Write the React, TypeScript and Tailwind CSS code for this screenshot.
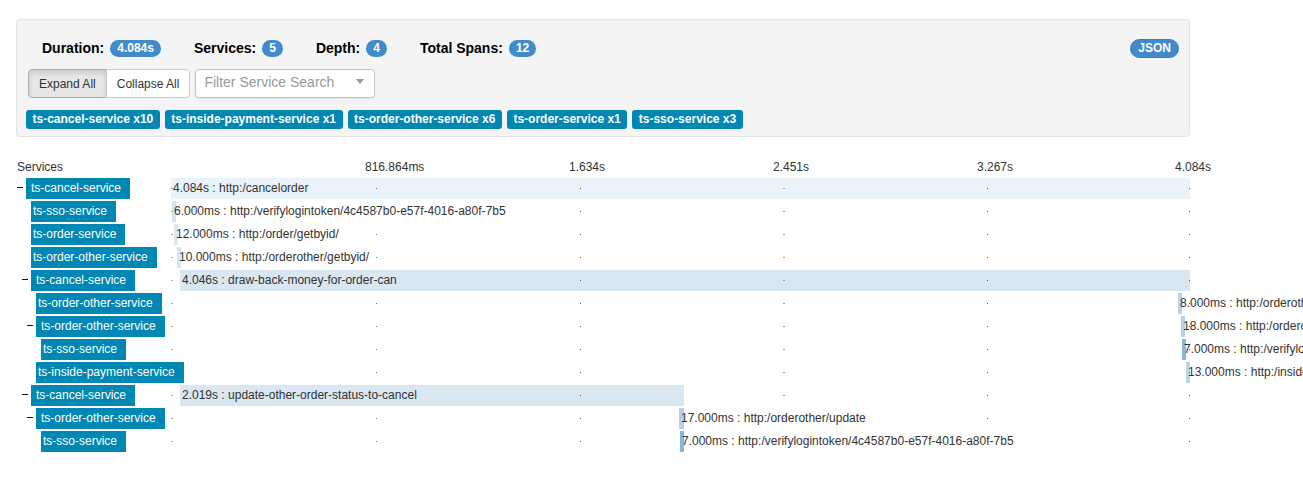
import React from "react";

type Row = {
  depth: number;
  toggle: boolean;
  name: string;
  boxW: string;
  left: number;
  width: number;
  barColor: string;
  text: string;
};

const depthPad: Record<number, string> = {
  0: "pl-[1px]",
  1: "pl-[6px]",
  2: "pl-[11px]",
  3: "pl-[16px]",
};

const rows: Row[] = [
  { depth: 0, toggle: true, name: "ts-cancel-service", boxW: "w-[104px]", left: 0, width: 1019, barColor: "bg-[#ebf3fa]", text: "4.084s : http:/cancelorder" },
  { depth: 1, toggle: false, name: "ts-sso-service", boxW: "w-[85px]", left: 1, width: 4, barColor: "bg-[#d3e4f1]", text: "6.000ms : http:/verifylogintoken/4c4587b0-e57f-4016-a80f-7b5" },
  { depth: 1, toggle: false, name: "ts-order-service", boxW: "w-[94px]", left: 3, width: 4, barColor: "bg-[#dbe9f4]", text: "12.000ms : http:/order/getbyid/" },
  { depth: 1, toggle: false, name: "ts-order-other-service", boxW: "w-[126px]", left: 6, width: 4, barColor: "bg-[#d6e6f2]", text: "10.000ms : http:/orderother/getbyid/" },
  { depth: 1, toggle: true, name: "ts-cancel-service", boxW: "w-[104px]", left: 9, width: 1010, barColor: "bg-[#d8e7f2]", text: "4.046s : draw-back-money-for-order-can" },
  { depth: 2, toggle: false, name: "ts-order-other-service", boxW: "w-[126px]", left: 1007, width: 4, barColor: "bg-[#b7d4e9]", text: "8.000ms : http:/orderother/getbyid/" },
  { depth: 2, toggle: true, name: "ts-order-other-service", boxW: "w-[129px]", left: 1010, width: 4, barColor: "bg-[#b3d1e7]", text: "18.000ms : http:/orderother/drawback" },
  { depth: 3, toggle: false, name: "ts-sso-service", boxW: "w-[85px]", left: 1011, width: 4, barColor: "bg-[#86b7da]", text: "7.000ms : http:/verifylogintoken/4c4587b0" },
  { depth: 2, toggle: false, name: "ts-inside-payment-service", boxW: "w-[148px]", left: 1015, width: 4, barColor: "bg-[#b9d5ea]", text: "13.000ms : http:/inside_payment/drawback" },
  { depth: 1, toggle: true, name: "ts-cancel-service", boxW: "w-[104px]", left: 9, width: 504, barColor: "bg-[#d8e7f2]", text: "2.019s : update-other-order-status-to-cancel" },
  { depth: 2, toggle: true, name: "ts-order-other-service", boxW: "w-[129px]", left: 508, width: 5, barColor: "bg-[#b3d1e7]", text: "17.000ms : http:/orderother/update" },
  { depth: 3, toggle: false, name: "ts-sso-service", boxW: "w-[85px]", left: 509, width: 4, barColor: "bg-[#86b7da]", text: "7.000ms : http:/verifylogintoken/4c4587b0-e57f-4016-a80f-7b5" },
];

const dots = [
  { x: 0, w: 2, c: "#d9a35b" },
  { x: 205, w: 1, c: "#8e5b8e" },
  { x: 409, w: 1, c: "#7a3d7a" },
  { x: 612, w: 2, c: "#7fa3c4" },
  { x: 816, w: 1, c: "#555555" },
  { x: 1018, w: 1, c: "#6b4a6b" },
];

const tags = [
  "ts-cancel-service x10",
  "ts-inside-payment-service x1",
  "ts-order-other-service x6",
  "ts-order-service x1",
  "ts-sso-service x3",
];

function Stat({ label, value }: { label: string; value: string }) {
  return (
    <div className="flex items-center gap-[6px]">
      <span className="text-[14px] font-bold text-black leading-[17px]">{label}</span>
      <span className="h-[17px] rounded-full bg-[#428bca] px-[7px] text-[12px] font-bold leading-[17px] text-white">
        {value}
      </span>
    </div>
  );
}

export default function App() {
  return (
    <div
      className="min-h-[498px] w-full overflow-hidden bg-white pl-[16px] pt-[19px] text-[#333]"
      style={{ fontFamily: '"Liberation Sans", Arial, sans-serif' }}
    >
      {/* Summary panel */}
      <div className="w-[1174px] rounded-[4px] border border-[#e3e3e3] bg-[#f4f4f4] px-[10px] pb-[7px] pt-[19px]">
        <div className="flex items-center justify-between">
          <div className="ml-[15px] flex items-center gap-[33px]">
            <Stat label="Duration:" value="4.084s" />
            <Stat label="Services:" value="5" />
            <Stat label="Depth:" value="4" />
            <Stat label="Total Spans:" value="12" />
          </div>
          <span className="h-[19px] rounded-full border border-[#357ebd] bg-[#428bca] px-[7px] text-[12px] font-bold leading-[17px] text-white">
            JSON
          </span>
        </div>

        <div className="mt-[11px] flex items-center pl-[1px]">
          <button className="h-[29px] rounded-l-[4px] border border-[#adadad] bg-[#e6e6e6] px-[10px] text-[12px] text-[#333] shadow-[inset_0_3px_5px_rgba(0,0,0,0.125)]">
            Expand All
          </button>
          <button className="-ml-px h-[29px] rounded-r-[4px] border border-[#cccccc] bg-white px-[10px] text-[12px] text-[#333]">
            Collapse All
          </button>
          <div className="ml-[5px] flex h-[29px] w-[180px] items-center justify-between rounded-[4px] border border-[#c4c4c4] bg-white pl-[8px] pr-[10px] shadow-[0_1px_2px_rgba(0,0,0,0.08)]">
            <span className="-mt-[3px] text-[14px] text-[#999]">Filter Service Search</span>
            <svg width="8" height="5" viewBox="0 0 8 5" className="-mt-[4px]">
              <path d="M0 0 L8 0 L4 5 Z" fill="#999" />
            </svg>
          </div>
        </div>

        <div className="-ml-px mt-[12px] flex items-center gap-[5px]">
          {tags.map((t) => (
            <span
              key={t}
              className="h-[19px] rounded-[3px] bg-[#0087b4] px-[6.5px] text-[12px] font-bold leading-[19px] text-white"
            >
              {t}
            </span>
          ))}
        </div>
      </div>

      {/* Timeline */}
      <div className="mt-[22px] w-[1174px]">
        <div className="flex h-[19px] text-[12px] leading-[16px] text-[#333]">
          <div className="w-[155px] shrink-0 pl-[1px]">Services</div>
          <div className="flex whitespace-nowrap">
            <div className="w-[194px] shrink-0" />
            <div className="w-[204px] shrink-0">816.864ms</div>
            <div className="w-[204px] shrink-0">1.634s</div>
            <div className="w-[204px] shrink-0">2.451s</div>
            <div className="w-[198px] shrink-0">3.267s</div>
            <div className="shrink-0">4.084s</div>
          </div>
        </div>

        {rows.map((r, i) => (
          <div key={i} className="flex h-[23px] items-start">
            <div className={`flex h-[21px] w-[155px] shrink-0 items-center ${depthPad[r.depth]}`}>
              <div className="flex w-[9px] shrink-0 items-center">
                {r.toggle && <div className="-mt-[2px] h-[1.5px] w-[6px] bg-[#111]" />}
              </div>
              <div
                className={`h-[21px] shrink-0 whitespace-nowrap bg-[#0087b4] text-[12px] leading-[21px] text-white ${r.boxW} ${
                  r.toggle ? "pl-[5px]" : "pl-[2px]"
                }`}
              >
                {r.name}
              </div>
            </div>
            <div className="relative h-[21px] w-[1019px] shrink-0">
              <div
                className={`absolute top-0 h-[21px] ${r.barColor}`}
                style={{ left: r.left, width: r.width }}
              />
              {dots.map((d, j) => (
                <div
                  key={j}
                  className="absolute top-[10px] h-px"
                  style={{ left: d.x, width: d.w, backgroundColor: d.c }}
                />
              ))}
              <div
                className="absolute top-0 whitespace-nowrap pl-[2px] text-[12px] leading-[21px] text-[#333]"
                style={{ left: r.left }}
              >
                {r.text}
              </div>
            </div>
          </div>
        ))}
      </div>
    </div>
  );
}
